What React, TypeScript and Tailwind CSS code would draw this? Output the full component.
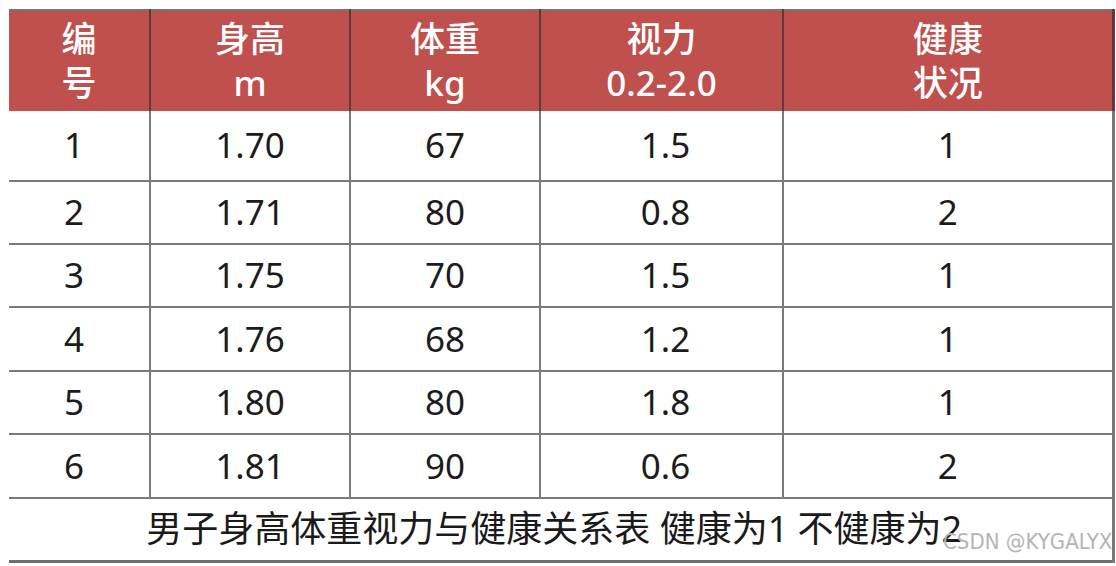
import React from 'react';

const rows = [
  { id: '1', height: '1.70', weight: '67', vision: '1.5', health: '1', h: 'h-[70px]' },
  { id: '2', height: '1.71', weight: '80', vision: '0.8', health: '2', h: 'h-[63px]' },
  { id: '3', height: '1.75', weight: '70', vision: '1.5', health: '1', h: 'h-[63px]' },
  { id: '4', height: '1.76', weight: '68', vision: '1.2', health: '1', h: 'h-[64px]' },
  { id: '5', height: '1.80', weight: '80', vision: '1.8', health: '1', h: 'h-[63px]' },
  { id: '6', height: '1.81', weight: '90', vision: '0.6', health: '2', h: 'h-[64px]' },
];

const headers = [
  ['编', '号'],
  ['身高', 'm'],
  ['体重', 'kg'],
  ['视力', '0.2-2.0'],
  ['健康', '状况'],
];

export default function App() {
  return (
    <div className="relative w-[1116px] h-[566px] bg-white pt-[9px] pl-[9px] font-['Noto_Sans','Noto_Sans_CJK_SC',sans-serif]">
      <table className="table-fixed border-collapse w-[1104px]">
        <colgroup>
          <col className="w-[141px]" />
          <col className="w-[200px]" />
          <col className="w-[190px]" />
          <col className="w-[243px]" />
          <col className="w-[330px]" />
        </colgroup>
        <thead>
          <tr className="h-[101px] bg-[#c0504d] border-t-2 border-t-[#7d7373]">
            {headers.map((lines, i) => (
              <th
                key={i}
                className={`p-0 font-medium text-white text-[35px] leading-[44px] border-[#5e3b3a] ${
                  i === 0 ? 'border-r-2' : 'border-x-2'
                } ${i === 4 ? 'border-r-[3px]' : ''}`}
              >
                <div>{lines[0]}</div>
                <div>{lines[1]}</div>
              </th>
            ))}
          </tr>
        </thead>
        <tbody>
          {rows.map((r) => (
            <tr key={r.id} className={`${r.h} border-b-2 border-[#7a7a7a]`}>
              <td className="p-0 pr-[10px] text-center text-[35px] text-[#1c1c1c] border-r-2 border-[#7a7a7a]">{r.id}</td>
              <td className="p-0 text-center text-[35px] text-[#1c1c1c] border-r-2 border-[#7a7a7a]">{r.height}</td>
              <td className="p-0 text-center text-[35px] text-[#1c1c1c] border-r-2 border-[#7a7a7a]">{r.weight}</td>
              <td className="p-0 pl-[8px] text-center text-[35px] text-[#1c1c1c] border-r-2 border-[#7a7a7a]">{r.vision}</td>
              <td className="p-0 text-center text-[35px] text-[#1c1c1c] border-r-[3px] border-[#7a7a7a]">{r.health}</td>
            </tr>
          ))}
          <tr className="h-[63px] border-b-[3px] border-[#6e6e6e]">
            <td colSpan={5} className="p-0 pr-[12px] text-center text-[36px] text-[#1a1a1a] border-r-[3px] border-[#7a7a7a]">
              男子身高体重视力与健康关系表 健康为1 不健康为2
            </td>
          </tr>
        </tbody>
      </table>
      <div className="absolute left-[943px] top-[531px] text-[22px] leading-none text-[#b4b4b4] font-['Liberation_Sans_Narrow','DejaVu_Sans_Condensed','Liberation_Sans',sans-serif]">
        CSDN @KYGALYX
      </div>
    </div>
  );
}
